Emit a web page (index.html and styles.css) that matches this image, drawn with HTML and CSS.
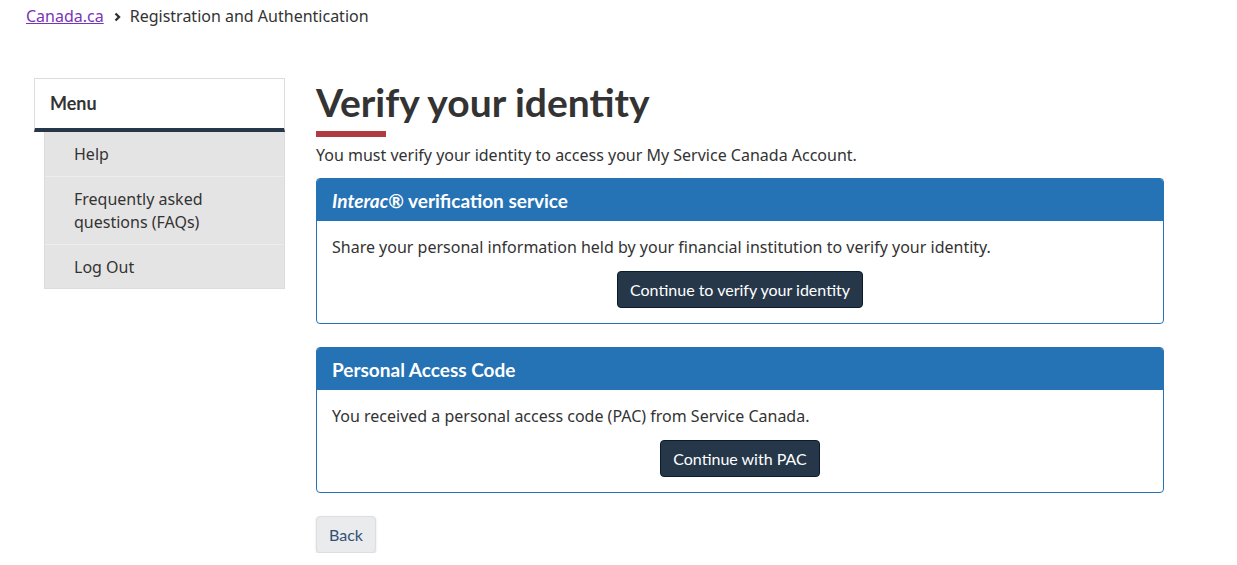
FILE: index.html
```html
<!DOCTYPE html>
<html lang="en">
<head>
<meta charset="utf-8">
<title>Verify your identity</title>
<link rel="stylesheet" href="styles.css">
</head>
<body>
<nav class="breadcrumb">
  <a href="#" class="crumb-link">Canada.ca</a>
  <svg class="chev" width="8" height="10" viewBox="0 0 8 10"><path d="M1.5 1.5 L5 5 L1.5 8.5" fill="none" stroke="#333" stroke-width="2.4"/></svg>
  <span>Registration and Authentication</span>
</nav>
<div class="layout">
  <aside class="sidebar">
    <div class="menu-head">Menu</div>
    <ul class="menu-list">
      <li class="menu-item">Help</li>
      <li class="menu-item">Frequently asked questions (FAQs)</li>
      <li class="menu-item">Log Out</li>
    </ul>
  </aside>
  <main class="main">
    <h1 class="title">Verify your identity</h1>
    <p class="lead">You must verify your identity to access your My Service Canada Account.</p>
    <section class="panel">
      <h2 class="panel-head"><i>Interac</i>® verification service</h2>
      <div class="panel-body">
        <p class="panel-text">Share your personal information held by your financial institution to verify your identity.</p>
        <div class="btn-row"><button class="btn-primary">Continue to verify your identity</button></div>
      </div>
    </section>
    <section class="panel">
      <h2 class="panel-head">Personal Access Code</h2>
      <div class="panel-body">
        <p class="panel-text">You received a personal access code (PAC) from Service Canada.</p>
        <div class="btn-row"><button class="btn-primary">Continue with PAC</button></div>
      </div>
    </section>
    <button class="btn-default">Back</button>
  </main>
</div>
</body>
</html>
```

FILE: styles.css
```css
* { box-sizing: border-box; }
body {
  margin: 0;
  font-family: "Noto Sans", sans-serif;
  font-size: 16px;
  line-height: 23px;
  color: #333;
  background: #fff;
}
.breadcrumb {
  display: flex;
  align-items: center;
  padding: 5px 0 0 26px;
  height: 28px;
}
.crumb-link {
  color: #7834bc;
  text-decoration: underline;
}
.chev { margin: 0 8px 0 10px; }
.layout {
  display: flex;
  padding: 50px 0 0 34px;
  gap: 31px;
}
.sidebar { width: 251px; flex: none; }
.menu-head {
  font-family: Lato, sans-serif;
  font-weight: 700;
  font-size: 18px;
  color: #333;
  border: 1px solid #ddd;
  border-bottom: 4px solid #26374a;
  height: 54px;
  padding: 13px 0 0 15px;
  line-height: 23px;
}
.menu-list {
  list-style: none;
  margin: 0 0 0 10px;
  padding: 0;
  background: #e5e4e4;
  border: 1px solid #dcdcdc;
  border-top: none;
}
.menu-item {
  padding: 11px 20px 10px 29px;
  border-bottom: 1px solid #ededed;
}
.menu-item:last-child { border-bottom: none; padding-bottom: 9px; }
.main { width: 848px; flex: none; }
.title {
  font-family: Lato, sans-serif;
  font-weight: 700;
  font-size: 39px;
  line-height: 42px;
  margin: 3px 0 0;
  color: #333;
}
.title::after {
  content: "";
  display: block;
  width: 70px;
  height: 6px;
  background: #af3c43;
  margin-top: 8px;
}
.lead { margin: 7px 0 11px; }
.panel {
  border: 1px solid #2572b4;
  border-radius: 4px;
  margin-bottom: 23px;
  overflow: hidden;
}
.panel-head {
  margin: 0;
  background: #2572b4;
  color: #fff;
  font-family: Lato, sans-serif;
  font-weight: 700;
  font-size: 19px;
  line-height: 23px;
  padding: 10px 15px 8px;
  height: 42px;
}
.panel-body { padding: 15px 15px 15px; }
.panel-text { margin: 0 0 12px; }
.btn-row { display: flex; justify-content: center; }
.btn-primary {
  font-family: Lato, sans-serif;
  font-size: 16px;
  line-height: 23px;
  color: #fff;
  background: #26374a;
  border: 1px solid #091c2d;
  border-radius: 4px;
  padding: 6px 12px;
  height: 37px;
}
.btn-default {
  font-family: Lato, sans-serif;
  font-size: 16px;
  line-height: 23px;
  color: #335075;
  background: #eaebed;
  border: 1px solid #dcdee1;
  border-radius: 4px;
  padding: 6px 12px;
  height: 37px;
  box-shadow: 0 1px 2px rgba(0,0,0,0.15);
}
```
